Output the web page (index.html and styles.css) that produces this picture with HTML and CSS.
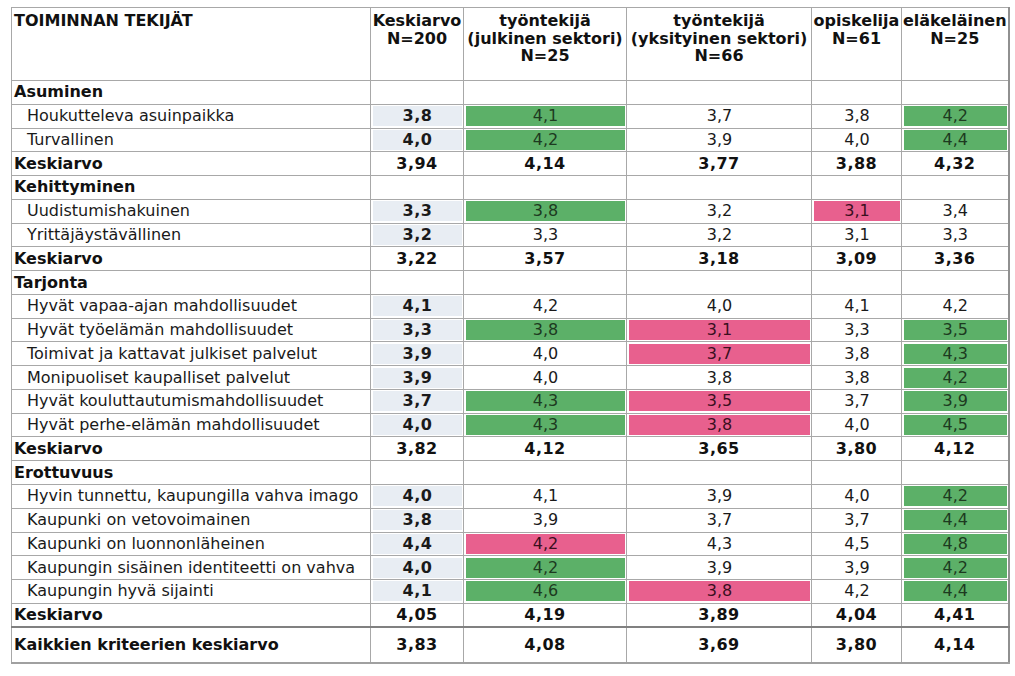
FILE: index.html
```html
<!DOCTYPE html>
<html lang="fi">
<head>
<meta charset="utf-8">
<link rel="stylesheet" href="styles.css">
<title>Toiminnan tekijät</title>
</head>
<body>
<table class="tbl">
<colgroup>
<col class="c-label"><col class="c-avg"><col class="c-pub"><col class="c-priv"><col class="c-stu"><col class="c-ret">
</colgroup>
<thead>
<tr class="head">
<th class="lbl">TOIMINNAN TEKIJÄT</th>
<th>Keskiarvo<br>N=200</th>
<th>työntekijä<br>(julkinen sektori)<br>N=25</th>
<th>työntekijä<br>(yksityinen sektori)<br>N=66</th>
<th>opiskelija<br>N=61</th>
<th>eläkeläinen<br>N=25</th>
</tr>
</thead>
<tbody>
<tr class="grp"><td class="lbl">Asuminen</td><td></td><td></td><td></td><td></td><td></td></tr>
<tr><td class="item">Houkutteleva asuinpaikka</td><td><span class="v avg">3,8</span></td><td><span class="v g">4,1</span></td><td><span class="v">3,7</span></td><td><span class="v">3,8</span></td><td><span class="v g">4,2</span></td></tr>
<tr><td class="item">Turvallinen</td><td><span class="v avg">4,0</span></td><td><span class="v g">4,2</span></td><td><span class="v">3,9</span></td><td><span class="v">4,0</span></td><td><span class="v g">4,4</span></td></tr>
<tr class="sum"><td class="lbl">Keskiarvo</td><td>3,94</td><td>4,14</td><td>3,77</td><td>3,88</td><td>4,32</td></tr>

<tr class="grp"><td class="lbl">Kehittyminen</td><td></td><td></td><td></td><td></td><td></td></tr>
<tr><td class="item">Uudistumishakuinen</td><td><span class="v avg">3,3</span></td><td><span class="v g">3,8</span></td><td><span class="v">3,2</span></td><td><span class="v p">3,1</span></td><td><span class="v">3,4</span></td></tr>
<tr><td class="item">Yrittäjäystävällinen</td><td><span class="v avg">3,2</span></td><td><span class="v">3,3</span></td><td><span class="v">3,2</span></td><td><span class="v">3,1</span></td><td><span class="v">3,3</span></td></tr>
<tr class="sum"><td class="lbl">Keskiarvo</td><td>3,22</td><td>3,57</td><td>3,18</td><td>3,09</td><td>3,36</td></tr>

<tr class="grp"><td class="lbl">Tarjonta</td><td></td><td></td><td></td><td></td><td></td></tr>
<tr><td class="item">Hyvät vapaa-ajan mahdollisuudet</td><td><span class="v avg">4,1</span></td><td><span class="v">4,2</span></td><td><span class="v">4,0</span></td><td><span class="v">4,1</span></td><td><span class="v">4,2</span></td></tr>
<tr><td class="item">Hyvät työelämän mahdollisuudet</td><td><span class="v avg">3,3</span></td><td><span class="v g">3,8</span></td><td><span class="v p">3,1</span></td><td><span class="v">3,3</span></td><td><span class="v g">3,5</span></td></tr>
<tr><td class="item">Toimivat ja kattavat julkiset palvelut</td><td><span class="v avg">3,9</span></td><td><span class="v">4,0</span></td><td><span class="v p">3,7</span></td><td><span class="v">3,8</span></td><td><span class="v g">4,3</span></td></tr>
<tr><td class="item">Monipuoliset kaupalliset palvelut</td><td><span class="v avg">3,9</span></td><td><span class="v">4,0</span></td><td><span class="v">3,8</span></td><td><span class="v">3,8</span></td><td><span class="v g">4,2</span></td></tr>
<tr><td class="item">Hyvät kouluttautumismahdollisuudet</td><td><span class="v avg">3,7</span></td><td><span class="v g">4,3</span></td><td><span class="v p">3,5</span></td><td><span class="v">3,7</span></td><td><span class="v g">3,9</span></td></tr>
<tr><td class="item">Hyvät perhe-elämän mahdollisuudet</td><td><span class="v avg">4,0</span></td><td><span class="v g">4,3</span></td><td><span class="v p">3,8</span></td><td><span class="v">4,0</span></td><td><span class="v g">4,5</span></td></tr>
<tr class="sum"><td class="lbl">Keskiarvo</td><td>3,82</td><td>4,12</td><td>3,65</td><td>3,80</td><td>4,12</td></tr>

<tr class="grp"><td class="lbl">Erottuvuus</td><td></td><td></td><td></td><td></td><td></td></tr>
<tr><td class="item">Hyvin tunnettu, kaupungilla vahva imago</td><td><span class="v avg">4,0</span></td><td><span class="v">4,1</span></td><td><span class="v">3,9</span></td><td><span class="v">4,0</span></td><td><span class="v g">4,2</span></td></tr>
<tr><td class="item">Kaupunki on vetovoimainen</td><td><span class="v avg">3,8</span></td><td><span class="v">3,9</span></td><td><span class="v">3,7</span></td><td><span class="v">3,7</span></td><td><span class="v g">4,4</span></td></tr>
<tr><td class="item">Kaupunki on luonnonläheinen</td><td><span class="v avg">4,4</span></td><td><span class="v p">4,2</span></td><td><span class="v">4,3</span></td><td><span class="v">4,5</span></td><td><span class="v g">4,8</span></td></tr>
<tr><td class="item">Kaupungin sisäinen identiteetti on vahva</td><td><span class="v avg">4,0</span></td><td><span class="v g">4,2</span></td><td><span class="v">3,9</span></td><td><span class="v">3,9</span></td><td><span class="v g">4,2</span></td></tr>
<tr><td class="item">Kaupungin hyvä sijainti</td><td><span class="v avg">4,1</span></td><td><span class="v g">4,6</span></td><td><span class="v p">3,8</span></td><td><span class="v">4,2</span></td><td><span class="v g">4,4</span></td></tr>
<tr class="sum"><td class="lbl">Keskiarvo</td><td>4,05</td><td>4,19</td><td>3,89</td><td>4,04</td><td>4,41</td></tr>

<tr class="total"><td class="lbl">Kaikkien kriteerien keskiarvo</td><td>3,83</td><td>4,08</td><td>3,69</td><td>3,80</td><td>4,14</td></tr>
</tbody>
</table>
</body>
</html>
```

FILE: styles.css
```css
html, body {
  margin: 0;
  padding: 0;
  background: #ffffff;
}

body {
  padding: 7px 0 0 11px;
  font-family: "DejaVu Sans", Verdana, sans-serif;
  font-size: 16px;
  color: #111;
}

.tbl {
  border-collapse: collapse;
  table-layout: fixed;
  width: 998px;
  border-top: 1px solid #a8a8a8;
  border-left: 1px solid #a8a8a8;
  border-right: 2px solid #909090;
  border-bottom: 2px solid #a0a0a0;
}

.c-label { width: 359px; }
.c-avg { width: 93px; }
.c-pub { width: 163px; }
.c-priv { width: 185px; }
.c-stu { width: 90px; }
.c-ret { width: 107px; }

.tbl th,
.tbl td {
  border: 1px solid #a8a8a8;
  padding: 0;
  text-align: center;
  line-height: 18px;
  white-space: nowrap;
  overflow: hidden;
}

.head th {
  height: 68px;
  vertical-align: top;
  font-weight: bold;
  padding-top: 4px;
  line-height: 17.5px;
}

.head th.lbl {
  text-align: left;
  padding-left: 2px;
}

.tbl tbody tr {
  height: 23.78px;
}

.tbl td.lbl {
  text-align: left;
  padding-left: 2px;
  font-weight: bold;
}

.tbl td.item {
  text-align: left;
  padding-left: 15px;
  color: #1a1a1a;
}

.sum td {
  font-weight: bold;
  letter-spacing: 0.5px;
}

.sum td.lbl,
.total td.lbl {
  letter-spacing: 0;
}

.v {
  display: block;
  margin: 1px 1px 1px 2px;
  height: 20px;
  line-height: 20px;
  color: #1a1a1a;
}

.v.avg {
  background: #e8edf3;
  font-weight: bold;
  letter-spacing: 0.5px;
}

.v.g {
  background: #5cb068;
  color: #1d3a20;
}

.v.p {
  background: #e8608e;
  color: #3a0f1e;
}

.total td {
  height: 34px;
  font-weight: bold;
  letter-spacing: 0.5px;
  border-top: 2px solid #808080;
}
```
